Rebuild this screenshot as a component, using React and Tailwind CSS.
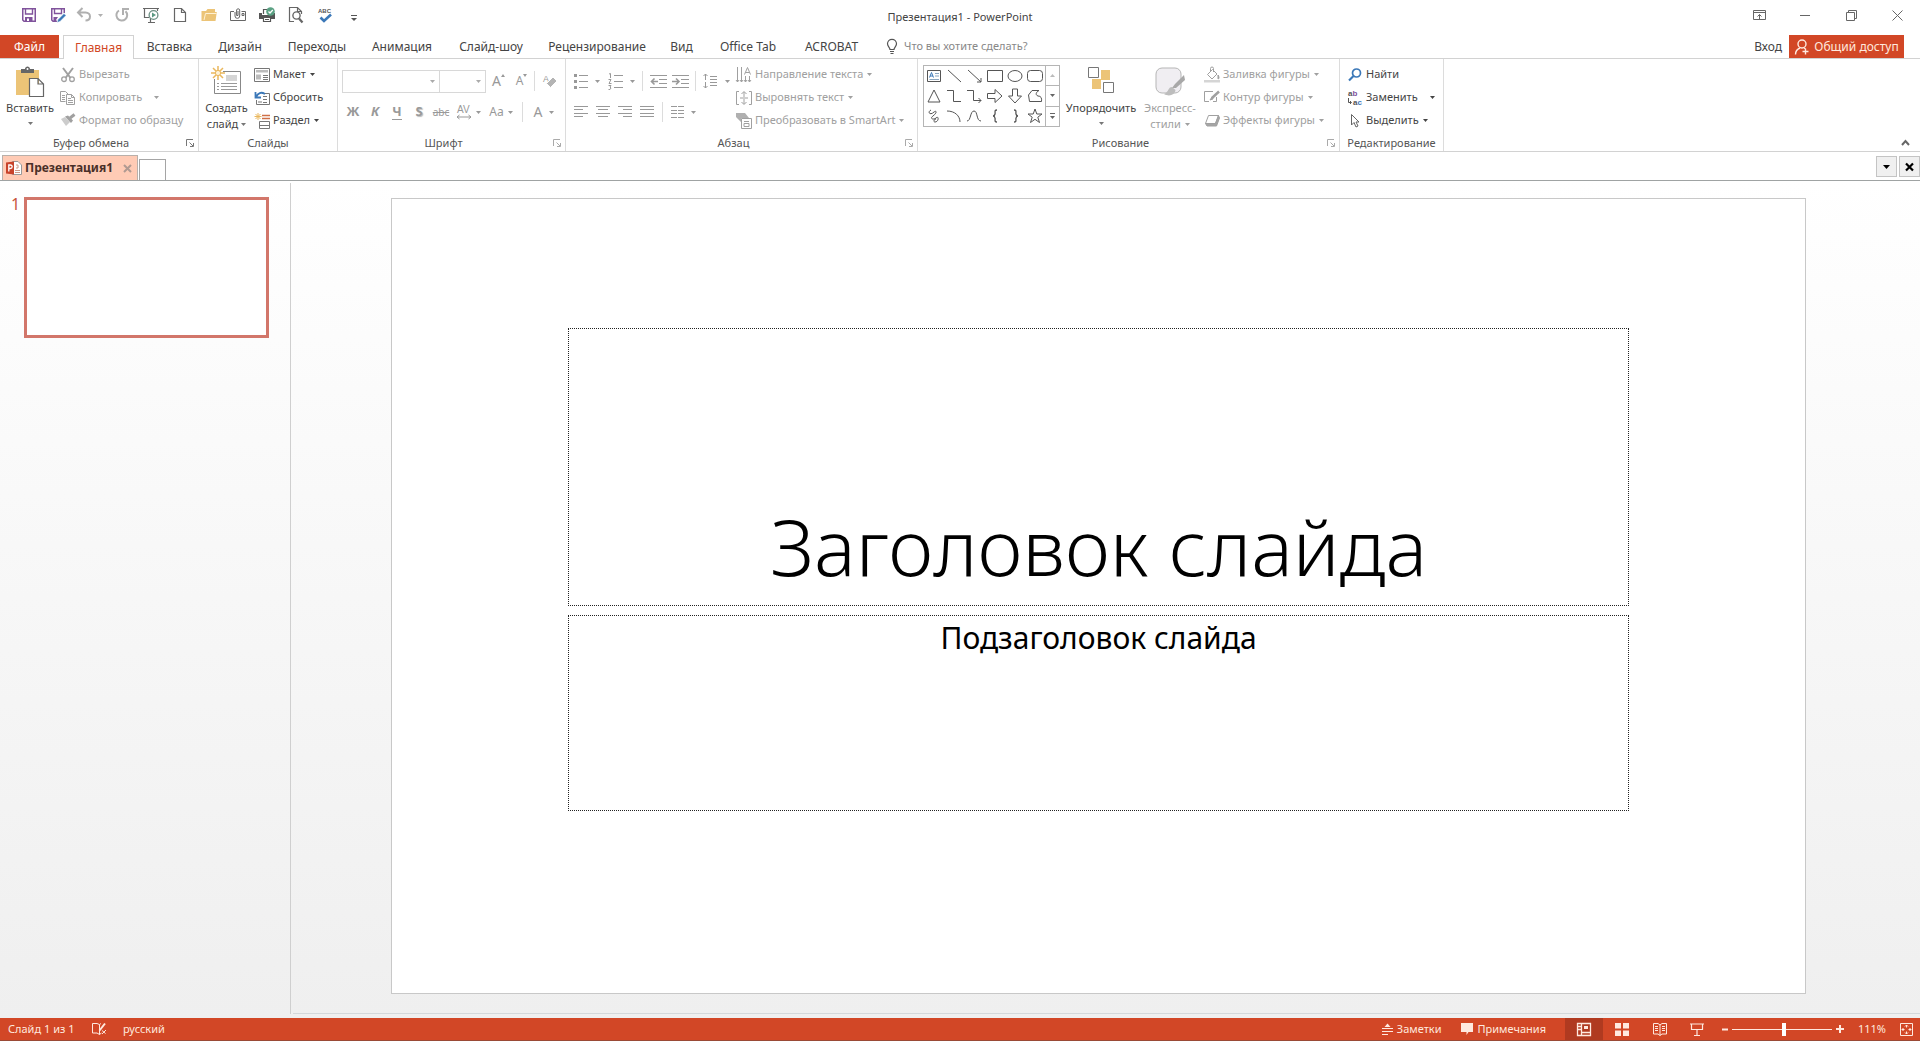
import React from "react";

function Svg({ w = 16, h = 16, className = "", children }) {
  return (
    <svg
      width={w}
      height={h}
      viewBox={`0 0 ${w} ${h}`}
      fill="none"
      stroke="currentColor"
      strokeWidth="1"
      className={`shrink-0 overflow-visible ${className}`}
      aria-hidden="true"
    >
      {children}
    </svg>
  );
}

function Caret({ className = "" }) {
  return (
    <Svg w={5} h={3} className={className}>
      <path d="M0 0H5L2.5 3Z" fill="currentColor" stroke="none" />
    </Svg>
  );
}

/* ---------- Title bar ---------- */

const quickAccess = [
  {
    name: "Сохранить",
    icon: (
      <Svg className="text-[#80539c]">
        <path d="M1.75 1.75H14.25V14.25H3L1.75 13Z" strokeWidth="1.5" />
        <path d="M4.5 2V7H11.5V2" strokeWidth="1.4" />
        <path d="M4 14V10H11.5V14Z" fill="currentColor" stroke="none" />
        <path d="M6 11.5H8V14H6Z" fill="#fff" stroke="none" />
      </Svg>
    ),
  },
  {
    name: "Сохранить как",
    icon: (
      <Svg className="text-[#80539c]">
        <path d="M14.25 6V1.75H1.75V13L3 14.25H7" strokeWidth="1.5" />
        <path d="M4.5 2V6.5H11.5V2" strokeWidth="1.4" />
        <path d="M3.5 10H8L6 13V14H3.5Z" fill="currentColor" stroke="none" />
        <path d="M14 6.5L8 12.5L7 15.5L10 14.5L16 8.5Z" fill="#3b78b8" stroke="#fff" strokeWidth="0.5" />
      </Svg>
    ),
  },
  {
    name: "Отменить",
    wide: true,
    icon: (
      <span className="flex items-center gap-1.5 text-[#b0b0b0]">
        <Svg>
          <path d="M6.5 1L2 5.5L6.5 10M2.5 5.5H9.5C12.5 5.5 14 7.5 14 9.5C14 12 12 13.5 9.5 13.5" strokeWidth="2" />
        </Svg>
        <Caret />
      </span>
    ),
  },
  {
    name: "Повторить",
    icon: (
      <Svg className="text-[#b0b0b0]">
        <path d="M11.5 4.2A5.4 5.4 0 1 1 5 3.5" strokeWidth="2" />
        <path d="M9 8V2H15" strokeWidth="2" />
      </Svg>
    ),
  },
  {
    name: "Слайд-шоу с начала",
    icon: (
      <Svg className="text-[#666]">
        <path d="M0 1.5H16M1.5 2V10.5H6M14.5 2V4M5 15.5H12M7.5 11V15" strokeWidth="1.2" />
        <circle cx="10.5" cy="8" r="4.4" stroke="#6b8f83" strokeWidth="1.3" fill="#fff" />
        <path d="M9 5.6V10.4L13 8Z" fill="#5b9a83" stroke="none" />
      </Svg>
    ),
  },
  {
    name: "Создать",
    icon: (
      <Svg className="text-[#666]">
        <path d="M2.5 1.5H9.5L13.5 5.5V14.5H2.5ZM9.5 1.5V5.5H13.5" strokeWidth="1.2" />
      </Svg>
    ),
  },
  {
    name: "Открыть",
    icon: (
      <Svg className="text-[#ecc477]">
        <path d="M0.5 14V4H5L6.5 2H14V5H15.8L14.5 14Z" fill="currentColor" stroke="none" />
        <path d="M3 13L4.5 6.5H15.5" stroke="#fff1d3" />
      </Svg>
    ),
  },
  {
    name: "Отправить по электронной почте",
    icon: (
      <Svg className="text-[#666]">
        <path d="M4 4.5H0.5V13.5H15.5V4.5H11.5" />
        <path d="M5 5V9A2.3 2.3 0 0 0 9.7 9V3A1.6 1.6 0 0 0 6.6 3V8.5H8V4" />
        <path d="M12 6.5H14V8.5H12Z" />
      </Svg>
    ),
  },
  {
    name: "Быстрая печать",
    icon: (
      <Svg className="text-[#555]">
        <path d="M0 6H3V8H13V6H16V12H12V10H4V12H0Z" fill="currentColor" stroke="none" />
        <path d="M4.5 7V2.5H8M4.5 10.5H11.5V14.5H4.5ZM6 12.5H10" strokeWidth="1.2" />
        <circle cx="11.5" cy="4.5" r="4.3" fill="#5aa183" stroke="none" />
        <path d="M9.5 4.5L11 6L13.8 3" stroke="#fff" strokeWidth="1.3" />
      </Svg>
    ),
  },
  {
    name: "Просмотр",
    icon: (
      <Svg className="text-[#666]">
        <path d="M6 14.5H1.5V0.5H9.5L13.5 4.5V7M9.5 0.5V4.5H13" strokeWidth="1.2" />
        <circle cx="8.5" cy="8.5" r="3.6" strokeWidth="1.4" />
        <path d="M11 11.5L14.5 15.5" strokeWidth="2.2" />
      </Svg>
    ),
  },
  {
    name: "Орфография",
    icon: (
      <Svg w={18} className="text-[#555]">
        <text x="2" y="6" fontSize="6" fontWeight="700" fill="currentColor" stroke="none" fontFamily="Liberation Sans, sans-serif">
          ABC
        </text>
        <path d="M4.5 10.5L8 14L15 7.5" stroke="#3b78b8" strokeWidth="2.6" />
      </Svg>
    ),
  },
  {
    name: "Настройка панели быстрого доступа",
    icon: (
      <Svg w={8} className="text-[#555]">
        <path d="M1 8.5H7" />
        <path d="M1 11H7L4 14Z" fill="currentColor" stroke="none" />
      </Svg>
    ),
  },
];

function TitleBar() {
  return (
    <header className="grid h-[35px] grid-cols-[1fr_auto_1fr] items-start">
      <div className="flex h-[30px] items-center pl-[14px]">
        {quickAccess.map((q) => (
          <button
            key={q.name}
            type="button"
            aria-label={q.name}
            className={`flex h-6 items-center justify-center ${q.wide ? "w-[35px]" : "w-[29px]"}`}
          >
            {q.icon}
          </button>
        ))}
      </div>
      <h1 className="flex h-[34px] items-center text-[11px] text-[#444]">Презентация1 - PowerPoint</h1>
      <div className="flex h-[30px] justify-end text-[#666]">
        <button type="button" aria-label="Параметры отображения ленты" className="flex w-[46px] items-center justify-center">
          <Svg w={13} h={10}>
            <path d="M0.5 0.5H12.5V9.5H0.5ZM0.5 2.5H12.5M6.5 9V4.5M4.5 6.5L6.5 4.5L8.5 6.5" />
          </Svg>
        </button>
        <button type="button" aria-label="Свернуть" className="flex w-[46px] items-center justify-center">
          <Svg w={10} h={10}><path d="M0 5.5H10" /></Svg>
        </button>
        <button type="button" aria-label="Свернуть в окно" className="flex w-[46px] items-center justify-center">
          <Svg w={11} h={11}><path d="M0.5 2.5H8.5V10.5H0.5ZM2.5 2V0.5H10.5V8.5H9" /></Svg>
        </button>
        <button type="button" aria-label="Закрыть" className="flex w-[46px] items-center justify-center">
          <Svg w={11} h={11}><path d="M0.5 0.5L10.5 10.5M10.5 0.5L0.5 10.5" /></Svg>
        </button>
      </div>
    </header>
  );
}

/* ---------- Ribbon tabs ---------- */

const tabs = [
  ["Вставка", "w-[71px]"],
  ["Дизайн", "w-[70px]"],
  ["Переходы", "w-[84px]"],
  ["Анимация", "w-[86px]"],
  ["Слайд-шоу", "w-[92px]"],
  ["Рецензирование", "w-[120px]"],
  ["Вид", "w-[49px]"],
  ["Office Tab", "w-[84px]"],
  ["ACROBAT", "w-[83px]"],
];

function TabRow() {
  return (
    <nav className="flex h-6 border-b border-[#d2d2d2] text-xs text-[#444]">
      <button type="button" className="w-[59px] bg-[#d24726] text-white">Файл</button>
      <button
        type="button"
        className="-mb-px ml-1 w-[71px] border border-b-0 border-[#d2d2d2] bg-white text-[#d24726]"
      >
        Главная
      </button>
      {tabs.map(([label, width]) => (
        <button key={label} type="button" className={`whitespace-nowrap ${width}`}>
          {label}
        </button>
      ))}
      <label className="ml-[13px] flex items-center gap-1.5 text-[#555]">
        <Svg w={12} h={15}>
          <path d="M4 10.5C4 8.5 1.5 7.5 1.5 4.8A4.4 4.4 0 0 1 10.5 4.8C10.5 7.5 8 8.5 8 10.5ZM4 12.5H8M4.5 14.5H7.5" strokeWidth="1.2" />
        </Svg>
        <input
          type="text"
          aria-label="Что вы хотите сделать?"
          placeholder="Что вы хотите сделать?"
          className="w-40 bg-transparent text-[11px] outline-none placeholder:text-[#888]"
        />
      </label>
      <div className="ml-auto flex">
        <button type="button" className="pl-[9px] pr-[7px]">Вход</button>
        <button type="button" className="mr-4 flex w-[115px] items-center justify-center gap-1 whitespace-nowrap bg-[#d24726] text-[#ffe9df]">
          <Svg>
            <circle cx="8" cy="5" r="4" strokeWidth="1.4" />
            <path d="M1.5 15.5C1.5 12 3.5 10 6 9M10 9L11.5 10M11.5 9.5V15.5M8.5 12.5H14.5" strokeWidth="1.4" />
          </Svg>
          <span className="text-xs">Общий доступ</span>
        </button>
      </div>
    </nav>
  );
}

/* ---------- Ribbon building blocks ---------- */

function Group({ label, width, launcher, dim, children }) {
  return (
    <section aria-label={label} className={`flex shrink-0 flex-col border-r border-[#dcdcdc] ${width}`}>
      <div className="flex h-[76px]">{children}</div>
      <div className="flex h-4 items-center">
        <h2 className="flex-1 whitespace-nowrap text-center text-[11px] text-[#555]">{label}</h2>
        {launcher && (
          <button type="button" aria-label={`${label}: параметры`} className={`w-4 ${dim ? "text-[#aaa]" : "text-[#777]"}`}>
            <Svg w={8} h={8} className="mx-auto">
              <path d="M0.5 7V0.5H7M3.5 3.5L7 7M7.5 4V7.5H4" />
            </Svg>
          </button>
        )}
      </div>
    </section>
  );
}

function Row({ icon, label, caret, far, dim }) {
  return (
    <button
      type="button"
      className={`flex h-[23px] items-center whitespace-nowrap text-[11px] ${dim ? "text-[#a0a0a0]" : "text-[#444]"}`}
    >
      <span className="mr-[3px] flex w-4 shrink-0 justify-center">{icon}</span>
      {label}
      {caret && <Caret className={far ? "ml-3" : "ml-1"} />}
    </button>
  );
}

function Tool({ label, width, children, bare }) {
  return (
    <button
      type="button"
      aria-label={label}
      className={`flex h-6 shrink-0 items-center justify-center ${width} ${bare ? "" : "gap-1"}`}
    >
      {children}
    </button>
  );
}

function Divider() {
  return <span className="h-5 w-px shrink-0 bg-[#dcdcdc]" />;
}

const lines = (rows) => rows.map(([x1, x2, y]) => <path key={y} d={`M${x1} ${y}H${x2}`} />);

/* ---------- Ribbon groups ---------- */

function ClipboardGroup() {
  return (
    <Group label="Буфер обмена" width="w-[199px]" launcher>
      <button type="button" className="flex w-[60px] flex-col items-center pt-[7px] text-[11px] leading-4 text-[#444]">
        <Svg w={30} h={32}>
          <path d="M1 4H24V29H1Z" fill="#ecc477" stroke="none" />
          <path d="M6 7V3H10C10 -0.5 15 -0.5 15 3H19V7Z" fill="#666" stroke="none" />
          <circle cx="12.5" cy="3" r="1" fill="#fff" stroke="none" />
          <path d="M14.5 12.5H23L28.5 18V30.5H14.5ZM23 12.5V18H28.5" fill="#fff" stroke="#666" strokeWidth="1.2" />
        </Svg>
        <span className="mt-0.5">Вставить</span>
        <Caret className="mt-1.5 text-[#777]" />
      </button>
      <div className="flex flex-col items-start pt-1">
        <Row
          dim
          label="Вырезать"
          icon={
            <Svg>
              <path d="M3 1L10.5 11M13 1L5.5 11" strokeWidth="2" />
              <circle cx="4" cy="12.2" r="2.3" strokeWidth="1.3" />
              <circle cx="12" cy="12.2" r="2.3" strokeWidth="1.3" />
            </Svg>
          }
        />
        <Row
          dim
          caret
          far
          label="Копировать"
          icon={
            <Svg>
              <path d="M5.5 11.5H0.5V1.5H5.5L8.5 4.5M2 5.5H5M2 7.5H5M2 9.5H5" />
              <path d="M6.5 4.5H11.5L14.5 7.5V14.5H6.5ZM11.5 4.5V7.5H14.5M8 8.5H11M8 10.5H13M8 12.5H13" />
            </Svg>
          }
        />
        <Row
          dim
          label="Формат по образцу"
          icon={
            <Svg>
              <path d="M1 6L5 4L10 9L6 13Z" fill="#ccc" stroke="none" />
              <path d="M5 3.5L8 2.5L13 7.5L11 10Z" fill="currentColor" stroke="none" />
              <path d="M10 5L14.5 1.5" strokeWidth="3" />
            </Svg>
          }
        />
      </div>
    </Group>
  );
}

function SlidesGroup() {
  return (
    <Group label="Слайды" width="w-[139px]">
      <button type="button" className="flex w-[55px] flex-col items-center pt-[7px] text-[11px] leading-4 text-[#444]">
        <Svg w={32} h={32}>
          <path d="M12 5.5H29.5V27.5H3.5V13" stroke="#888" />
          <path d="M15 9H26V15H15Z" fill="#d5d5d5" stroke="none" />
          <path d="M10 17.5H26M10 20.5H26M10 23.5H26M6 17.5H8M6 20.5H8M6 23.5H8" stroke="#999" />
          <path d="M7 0V14M0 7H14M2 2L12 12M12 2L2 12" stroke="#eab85e" strokeWidth="1.5" />
          <circle cx="7" cy="7" r="2.6" fill="#fff3d8" stroke="#eab85e" />
        </Svg>
        <span className="mt-0.5">Создать</span>
        <span className="flex items-center gap-[3px]">
          слайд
          <Caret className="text-[#777]" />
        </span>
      </button>
      <div className="flex flex-col items-start pt-1">
        <Row
          caret
          label="Макет"
          icon={
            <Svg className="text-[#777]">
              <path d="M0.5 1.5H15.5V14.5H0.5Z" />
              <path d="M2 3H14V5.5H2ZM2 7.5H7V12.5H2Z" fill="#bbb" stroke="none" />
              <path d="M9 8.5H14M9 10.5H14M9 12.5H14" />
            </Svg>
          }
        />
        <Row
          label="Сбросить"
          icon={
            <Svg className="text-[#777]">
              <path d="M8 3.5H15.5V14.5H2.5V10M9 6.5H13M9 9.5H13M9 12.5H13" />
              <path d="M4 11H8V13H4Z" fill="#bbb" stroke="none" />
              <path d="M1.5 2V7.5H7M2 7C4 3 7 1.5 11 4" stroke="#3b78b8" strokeWidth="1.8" />
            </Svg>
          }
        />
        <Row
          caret
          label="Раздел"
          icon={
            <Svg className="text-[#777]">
              <path d="M8 2.5H16M8 5.5H16" stroke="#cf7048" strokeWidth="1.3" />
              <path d="M5.5 8.5H15.5V15.5H5.5ZM5.5 12.5H15.5" />
              <path d="M4 0V7M0.5 3.5H7.5M1.5 1L6.5 6M6.5 1L1.5 6" stroke="#eab85e" />
            </Svg>
          }
        />
      </div>
    </Group>
  );
}

function Combo({ label, width }) {
  return (
    <span className={`flex h-[23px] items-center border border-[#d8d8d8] pr-1 text-[#aaa] ${width}`}>
      <select aria-label={label} disabled className="h-full min-w-0 flex-1 appearance-none bg-transparent text-[11px]">
        <option value="" />
      </select>
      <Caret />
    </span>
  );
}

function FontGroup() {
  return (
    <Group label="Шрифт" width="w-[228px]" launcher dim>
      <div className="pl-1 text-[#999]">
        <div className="mt-[10px] flex h-6 items-center">
          <Combo label="Шрифт" width="w-[98px]" />
          <Combo label="Размер шрифта" width="w-[46px] border-l-0" />
          <Tool label="Увеличить размер шрифта" width="w-[25px]" bare>
            <span className="text-sm leading-4">A</span>
            <Svg w={4} h={10}><path d="M0 1L2 -2L4 1Z" fill="currentColor" stroke="none" /></Svg>
          </Tool>
          <Tool label="Уменьшить размер шрифта" width="w-[21px]" bare>
            <span className="text-xs leading-4">A</span>
            <Svg w={4} h={12}><path d="M0 -1H4L2 2Z" fill="currentColor" stroke="none" /></Svg>
          </Tool>
          <span className="w-0.5" />
          <Divider />
          <Tool label="Очистить формат" width="w-[32px]">
            <Svg>
              <text x="0" y="9" fontSize="9" fill="currentColor" stroke="none" fontFamily="Liberation Sans, sans-serif">A</text>
              <path d="M3.5 10.5L10 4L14 8L7.5 14.5Z" fill="#b4b4b4" stroke="#fff" />
            </Svg>
          </Tool>
        </div>
        <div className="mt-[7px] flex h-6 items-center text-[13px]">
          <Tool label="Полужирный" width="w-[22px]"><b className="font-bold">Ж</b></Tool>
          <Tool label="Курсив" width="w-[22px]"><i className="font-bold">К</i></Tool>
          <Tool label="Подчеркнутый" width="w-[22px]"><b className="border-b border-[#999] leading-[15px]">Ч</b></Tool>
          <Tool label="Тень текста" width="w-[22px]"><b className="[text-shadow:1px_1px_1px_#bbb]">S</b></Tool>
          <Tool label="Зачеркнутый" width="w-[22px]"><span className="text-[10px] line-through">abc</span></Tool>
          <Tool label="Межзнаковый интервал" width="w-[32px]">
            <Svg w={16} h={16}>
              <text x="1" y="9" fontSize="10" fill="currentColor" stroke="none" fontFamily="Liberation Sans, sans-serif">AV</text>
              <path d="M1 13H15M3.5 11L1 13L3.5 15M12.5 11L15 13L12.5 15" />
            </Svg>
            <Caret />
          </Tool>
          <Tool label="Регистр" width="w-[34px]">
            <span className="text-xs">Aa</span>
            <Caret />
          </Tool>
          <span className="w-1" />
          <Divider />
          <Tool label="Цвет текста" width="w-[42px]">
            <span className="mr-[3px] text-sm">A</span>
            <Caret />
          </Tool>
        </div>
      </div>
    </Group>
  );
}

function ParagraphGroup() {
  return (
    <Group label="Абзац" width="w-[352px]" launcher dim>
      <div className="w-[170px] pl-1 text-[#999]">
        <div className="mt-[10px] flex h-6 items-center">
          <Tool label="Маркеры" width="w-[34px]">
            <span className="flex items-center gap-[7px]">
              <Svg w={14} h={15}>
                {lines([[5, 14, 1.5], [5, 14, 7.5], [5, 14, 13.5]])}
                <path d="M0 0H3V3H0ZM0 6H3V9H0ZM0 12H3V15H0Z" fill="currentColor" stroke="none" />
              </Svg>
              <Caret />
            </span>
          </Tool>
          <Tool label="Нумерация" width="w-[34px]">
            <span className="flex items-center gap-[7px]">
              <Svg w={15} h={17}>
                {lines([[6, 15, 2.5], [6, 15, 8.5], [6, 15, 14.5]])}
                <path d="M1 1L2.5 0.5V5M0.5 6.5H3L1 10.5H3.5M0.5 12.5H3L2 14L3 15L2 16.5H0.5" />
              </Svg>
              <Caret />
            </span>
          </Tool>
          <span className="w-1" />
          <Divider />
          <span className="w-1" />
          <Tool label="Уменьшить отступ" width="w-[22px]">
            <Svg w={17} h={15}>
              {lines([[0, 17, 1.5], [9, 17, 5.5], [9, 17, 9.5], [0, 17, 13.5]])}
              <path d="M8 7.5H2M4.5 4.5L1.5 7.5L4.5 10.5" strokeWidth="1.6" />
            </Svg>
          </Tool>
          <Tool label="Увеличить отступ" width="w-[22px]">
            <Svg w={17} h={15}>
              {lines([[0, 17, 1.5], [9, 17, 5.5], [9, 17, 9.5], [0, 17, 13.5]])}
              <path d="M0 7.5H6M4 4.5L7 7.5L4 10.5" strokeWidth="1.6" />
            </Svg>
          </Tool>
          <span className="w-1" />
          <Divider />
          <Tool label="Междустрочный интервал" width="w-[40px]">
            <span className="flex items-center gap-2">
              <Svg w={14} h={16}>
                {lines([[7, 14, 3.5], [7, 14, 6.5], [7, 14, 9.5], [7, 14, 12.5]])}
                <path d="M2.5 7V1M0.5 3L2.5 1L4.5 3M2.5 9V15M0.5 13L2.5 15L4.5 13" />
              </Svg>
              <Caret />
            </span>
          </Tool>
        </div>
        <div className="mt-[7px] flex h-6 items-center">
          <Tool label="По левому краю" width="w-[22px]">
            <Svg w={14} h={12}>{lines([[0, 14, 0.5], [0, 9, 3.5], [0, 14, 7.5], [0, 9, 10.5]])}</Svg>
          </Tool>
          <Tool label="По центру" width="w-[22px]">
            <Svg w={14} h={12}>{lines([[0, 14, 0.5], [2, 12, 3.5], [0, 14, 7.5], [2, 12, 10.5]])}</Svg>
          </Tool>
          <Tool label="По правому краю" width="w-[22px]">
            <Svg w={14} h={12}>{lines([[0, 14, 0.5], [5, 14, 3.5], [0, 14, 7.5], [5, 14, 10.5]])}</Svg>
          </Tool>
          <Tool label="По ширине" width="w-[22px]">
            <Svg w={14} h={12}>{lines([[0, 14, 0.5], [0, 14, 3.5], [0, 14, 7.5], [0, 14, 10.5]])}</Svg>
          </Tool>
          <span className="w-1" />
          <Divider />
          <Tool label="Колонки" width="w-[40px]">
            <span className="flex items-center gap-[7px]">
              <Svg w={13} h={12}>
                {lines([[0, 6, 0.5], [0, 6, 4.5], [0, 6, 7.5], [0, 6, 11.5]])}
                {lines([[7, 13, 0.5], [7, 13, 4.5], [7, 13, 7.5], [7, 13, 11.5]])}
              </Svg>
              <Caret />
            </span>
          </Tool>
        </div>
      </div>
      <div className="flex flex-col items-start pt-1">
        <Row
          dim
          caret
          label="Направление текста"
          icon={
            <Svg>
              <path d="M1.5 0V15M5.5 0V15M9.5 9V15M13.5 9V15M0 13L1.5 15L3 13M4 13L5.5 15L7 13M8 13L9.5 15L11 13M12 13L13.5 15L15 13" />
              <path d="M8.5 7.5L11.5 0.5L14.5 7.5M9.5 5.5H13.5" />
            </Svg>
          }
        />
        <Row
          dim
          caret
          label="Выровнять текст"
          icon={
            <Svg>
              <path d="M3 1.5H0.5V14.5H3M13 1.5H15.5V14.5H13M8 7V2M5.5 4L8 1.5L10.5 4M8 9V14M5.5 12L8 14.5L10.5 12M4 8H12" />
            </Svg>
          }
        />
        <Row
          dim
          caret
          label="Преобразовать в SmartArt"
          icon={
            <Svg>
              <path d="M0 0H9L13 5H5V9L0 4Z" fill="#b0b0b0" stroke="none" />
              <path d="M5.5 5.5H15.5V15.5H5.5ZM8 8.5H13M8 10.5H13V13.5H8Z" fill="#fff" />
            </Svg>
          }
        />
      </div>
    </Group>
  );
}

const shapes = [
  ["Надпись", <><path d="M1.5 2.5H14.5V13.5H1.5Z" /><path d="M3.5 9.5L5.5 4.5L7.5 9.5M4 8H7" stroke="#3b78b8" /><path d="M9 5.5H13M9 8H13M3.5 11.5H13" stroke="#8aa6c0" /></>],
  ["Линия", <path d="M2 2L15 14" />],
  ["Стрелка", <path d="M2 2L15 14M15 10V14H11" />],
  ["Прямоугольник", <path d="M0.5 2.5H15.5V13.5H0.5Z" />],
  ["Овал", <ellipse cx="8" cy="8" rx="7" ry="5.5" />],
  ["Скругленный прямоугольник", <rect x="0.5" y="2.5" width="15" height="11" rx="3" />],
  ["Треугольник", <path d="M8 2L14 14H2Z" />],
  ["Соединительная линия", <path d="M1 2.5H7.5V13.5H15" />],
  ["Соединительная стрелка", <path d="M1 2.5H7.5V12.5H15M12.5 10L15 12.5L12.5 15" />],
  ["Стрелка вправо", <path d="M0.5 5.5H8V1.5L15 8L8 14.5V10.5H0.5Z" />],
  ["Стрелка вниз", <path d="M5.5 1V8H1.5L8 15L14.5 8H10.5V1Z" />],
  ["Полилиния", <path d="M2.5 13.5L1.5 7L5 2.5H12C9 4 8 7 11 8C14 8 15 10 14.5 13.5Z" />],
  ["Рисованная кривая", <path d="M5 2C1 4 4 8 8 4C11 2 11 5 7 8C3 11 8 12 10 10C13 7 13 14 9 14C7 14 8 11 10 11" />],
  ["Дуга", <path d="M1 3C9 3 14 8 14 14" />],
  ["Кривая", <path d="M1 13C5 13 4 3 8 3C12 3 10 13 15 13" />],
  ["Левая фигурная скобка", <path d="M10 2C7 2 8.5 4 8 6C7.7 7.5 7 8 6 8C7 8 7.7 8.5 8 10C8.5 12 7 14 10 14" strokeWidth="1.3" />],
  ["Правая фигурная скобка", <path d="M7 2C10 2 8.5 4 9 6C9.3 7.5 10 8 11 8C10 8 9.3 8.5 9 10C8.5 12 10 14 7 14" strokeWidth="1.3" />],
  ["Звезда", <path d="M8 1L9.8 6H15L10.8 9.2L12.5 14.5L8 11.3L3.5 14.5L5.2 9.2L1 6H6.2Z" />],
];

function DrawingGroup() {
  return (
    <Group label="Рисование" width="w-[422px]" launcher dim>
      <div className="ml-[5px] mt-[6px] flex h-[62px] w-[137px] shrink-0 border border-[#b5b5b5] text-[#555]">
        <div className="grid flex-1 grid-cols-6 grid-rows-3">
          {shapes.map(([name, drawing]) => (
            <button key={name} type="button" aria-label={name} className="flex items-center justify-center">
              <Svg>{drawing}</Svg>
            </button>
          ))}
        </div>
        <div className="flex w-[14px] flex-col divide-y divide-[#b5b5b5] border-l border-[#b5b5b5] text-[#666]">
          <button type="button" aria-label="Вверх" className="flex flex-1 items-center justify-center text-[#bbb]">
            <Caret className="rotate-180" />
          </button>
          <button type="button" aria-label="Вниз" className="flex flex-1 items-center justify-center">
            <Caret />
          </button>
          <button type="button" aria-label="Дополнительные фигуры" className="flex flex-1 flex-col items-center justify-center gap-[2px]">
            <span className="h-px w-[5px] bg-[#666]" />
            <Caret />
          </button>
        </div>
      </div>
      <button type="button" className="ml-[3px] flex w-[76px] shrink-0 flex-col items-center pt-[7px] text-[11px] leading-4 text-[#444]">
        <Svg w={28} h={32}>
          <path d="M5 13H14V23H5ZM14 4H23V14H14Z" fill="#ecc477" stroke="none" />
          <path d="M1.5 1.5H11.5V11.5H1.5ZM16.5 16.5H26.5V26.5H16.5Z" fill="#fff" stroke="#777" />
        </Svg>
        <span className="mt-0.5">Упорядочить</span>
        <Caret className="mt-1.5 text-[#777]" />
      </button>
      <button type="button" className="mr-[3px] flex w-[62px] shrink-0 flex-col items-center whitespace-nowrap pt-[7px] text-[11px] leading-4 text-[#a0a0a0]">
        <Svg w={30} h={32}>
          <rect x="1" y="2" width="25" height="25" rx="6" fill="#f0eef2" stroke="#b5b5b5" />
          <path d="M29 9L20 18L17 22L21 22L30 14Z" fill="#a8a8a8" stroke="none" />
          <path d="M17 21C13 21 14 26 9 28C14 31 20 29 20.5 24Z" fill="#bdbdbd" stroke="none" />
        </Svg>
        <span className="mt-0.5">Экспресс-</span>
        <span className="flex items-center gap-1">
          стили
          <Caret />
        </span>
      </button>
      <div className="flex flex-col items-start pt-1">
        <Row
          dim
          caret
          label="Заливка фигуры"
          icon={
            <Svg>
              <path d="M3.5 7.5L8.5 2.5L13 7L8 12ZM6.5 4V1.5A1.5 1.5 0 0 1 9.5 1.5V5" />
              <path d="M14 8C16 11 14.5 12 14 12Z" fill="currentColor" />
              <path d="M0 13H16V15.5H0Z" fill="#d5d5d5" stroke="none" />
            </Svg>
          }
        />
        <Row
          dim
          caret
          label="Контур фигуры"
          icon={
            <Svg>
              <path d="M9 1.5H0.5V11.5H5M12.5 7V11.5H9" />
              <path d="M15 1.5L8 8" strokeWidth="2.5" />
              <path d="M8 7L6 10L9 9Z" fill="currentColor" />
            </Svg>
          }
        />
        <Row
          dim
          caret
          label="Эффекты фигуры"
          icon={
            <Svg>
              <path d="M4.5 2.5H14.5L11.5 10.5H1.5Z" fill="#fff" />
              <path d="M1.5 10.5L3 13H12.5L15.5 5L14.5 2.5L11.5 10.5Z" fill="#a5a5a5" />
            </Svg>
          }
        />
      </div>
    </Group>
  );
}

function EditingGroup() {
  return (
    <Group label="Редактирование" width="w-[104px]">
      <div className="flex flex-col items-start pl-[7px] pt-1">
        <Row
          label="Найти"
          icon={
            <Svg className="text-[#3b78b8]">
              <circle cx="9.5" cy="6" r="4" strokeWidth="1.7" />
              <path d="M6.5 9L2 13.5" strokeWidth="2.2" />
            </Svg>
          }
        />
        <Row
          caret
          far
          label="Заменить"
          icon={
            <Svg h={19}>
              <text x="1" y="8" fontSize="8" fontWeight="700" fill="#555" stroke="none" fontFamily="Liberation Sans, sans-serif">
                a<tspan fill="#80539c">b</tspan>
              </text>
              <text x="6" y="17" fontSize="8" fontWeight="700" fill="#555" stroke="none" fontFamily="Liberation Sans, sans-serif">
                a<tspan fill="#3b78b8">c</tspan>
              </text>
              <path d="M1.5 10V14.5H4M3 13L4.5 14.5L3 16" stroke="#555" />
            </Svg>
          }
        />
        <Row
          caret
          label="Выделить"
          icon={
            <Svg className="text-[#666]">
              <path d="M4.5 1.5V12L7 9.5L9 14L11 13L9 9H12Z" />
            </Svg>
          }
        />
      </div>
    </Group>
  );
}

function Ribbon() {
  return (
    <div className="flex h-[93px] border-b border-[#d2d2d2]">
      <ClipboardGroup />
      <SlidesGroup />
      <FontGroup />
      <ParagraphGroup />
      <DrawingGroup />
      <EditingGroup />
      <button type="button" aria-label="Свернуть ленту" className="mb-[5px] ml-auto mr-[10px] self-end text-[#666]">
        <Svg w={9} h={7}><path d="M1 6L4.5 2L8 6" strokeWidth="2" /></Svg>
      </button>
    </div>
  );
}

/* ---------- Document tabs ---------- */

function DocumentTabs() {
  return (
    <div className="flex h-[29px] items-end border-b border-[#9fa3a3] pl-[2px]">
      <div className="flex h-[25px] w-[136px] items-center border border-b-0 border-[#b9b0aa] bg-[#ffcbb5] pl-[3px]">
        <Svg w={16} h={16}>
          <path d="M6.5 1.5H12L15.5 5V14.5H6.5Z" fill="#fff" stroke="#999" />
          <path d="M10 5H12V8H10M9 10.5H14M9 12.5H14" stroke="#c98" />
          <path d="M0 2.5L8 1.5V14.5L0 13.5Z" fill="#c8432b" stroke="none" />
          <path d="M2.8 11.5V5H4.3C6.8 5 6.8 8.5 4.3 8.5H2.8" stroke="#fff" strokeWidth="1.3" />
        </Svg>
        <button type="button" className="ml-[3px] text-xs font-bold text-[#4a2f28]">Презентация1</button>
        <button type="button" aria-label="Закрыть вкладку" className="ml-auto mr-[5px] text-[#b09a92]">
          <Svg w={9} h={9}><path d="M1 1L8 8M8 1L1 8" strokeWidth="2" /></Svg>
        </button>
      </div>
      <button type="button" aria-label="Новая вкладка" className="ml-px h-[21px] w-[27px] border border-b-0 border-[#a5a5a5] bg-white" />
      <div className="mb-[3px] ml-auto flex gap-[2px] text-black">
        <button type="button" aria-label="Список вкладок" className="flex h-[21px] w-[21px] items-center justify-center border border-[#c4c4c4] bg-[#f0f0f0]">
          <Svg w={7} h={4}><path d="M0 0H7L3.5 4Z" fill="currentColor" stroke="none" /></Svg>
        </button>
        <button type="button" aria-label="Закрыть документ" className="flex h-[21px] w-[21px] items-center justify-center border border-[#c4c4c4] bg-[#f0f0f0]">
          <Svg w={9} h={8}><path d="M1 0.5L8 7.5M8 0.5L1 7.5" strokeWidth="2.2" /></Svg>
        </button>
      </div>
    </div>
  );
}

/* ---------- Workspace ---------- */

function Workspace() {
  return (
    <main className="flex flex-1 bg-linear-to-b from-white to-[#efefef] pb-1 pt-[2px]">
      <aside className="flex w-[291px] shrink-0 items-start border-r border-[#cfcfcf] pl-[11px] pt-[14px]">
        <span className="w-[13px] text-base leading-[14px] text-[#c8553d]">1</span>
        <button type="button" aria-label="Слайд 1" className="h-[141px] w-[245px] border-3 border-[#d2766a] bg-white" />
      </aside>
      <section className="ml-[2px] flex flex-1 border-b border-[#d4d8da] pb-[19px] pl-[98px] pr-[114px] pt-[15px]">
        <article className="flex min-h-[600px] flex-1 flex-col items-center border border-[#c8c8c8] bg-white pt-[129px]">
          <h2 className="box-content flex h-[276px] w-3/4 items-end justify-center border border-dotted border-[#222] text-[78px] font-light leading-[118px] text-black">
            Заголовок слайда
          </h2>
          <p className="mt-[9px] box-content h-[192px] w-3/4 border border-dotted border-[#222] pt-[2px] text-center text-[30px] leading-[40px] text-black">
            Подзаголовок слайда
          </p>
        </article>
      </section>
    </main>
  );
}

/* ---------- Status bar ---------- */

function StatusBar() {
  return (
    <footer className="flex h-[23px] items-center border-b border-[#9a4a36] bg-[#d24726] text-[11px] text-[#ffe9df]">
      <span className="w-[92px] whitespace-nowrap pl-2">Слайд 1 из 1</span>
      <button type="button" aria-label="Проверка правописания">
        <Svg w={15} h={14}>
          <path d="M7.5 2.5V12.5M7.5 2.5L5 1.5H0.5V11H5L7.5 12.5L9.5 11M7.5 2.5L9 1.5" />
          <path d="M13 1.5L7.5 8.5" strokeWidth="2" />
          <path d="M10 12L14 8M10 8.5L13.5 11.5" />
        </Svg>
      </button>
      <button type="button" className="ml-4">русский</button>

      <div className="ml-auto flex items-center self-stretch">
        <button type="button" className="flex items-center gap-1">
          <Svg w={11} h={13}>
            <path d="M0 5.5H11M0 8.5H11M0 11.5H6" />
            <path d="M2.5 4H8.5L5.5 0.5Z" fill="currentColor" stroke="none" />
          </Svg>
          Заметки
        </button>
        <button type="button" className="ml-5 flex items-center gap-1">
          <Svg w={12} h={12}>
            <path d="M0 0H12V9H7.5L5.5 12V9H0Z" fill="currentColor" stroke="none" />
          </Svg>
          Примечания
        </button>
        <button type="button" aria-label="Обычный" className="ml-[19px] flex w-[38px] items-center justify-center self-stretch bg-[#b03a20]">
          <Svg w={14} h={13}>
            <path d="M0.5 0.5H13.5V12.5H0.5ZM4.5 0.5V12.5M4.5 9.5H13.5M1 3.5H4M1 6.5H4" strokeWidth="1.3" />
            <path d="M7 3H11V6H7Z" fill="currentColor" stroke="none" />
          </Svg>
        </button>
        <button type="button" aria-label="Сортировщик слайдов" className="flex w-[38px] items-center justify-center">
          <Svg w={14} h={13}>
            <path d="M0 0H6V5.5H0ZM8 0H14V5.5H8ZM0 7.5H6V13H0ZM8 7.5H14V13H8Z" fill="currentColor" stroke="none" />
          </Svg>
        </button>
        <button type="button" aria-label="Режим чтения" className="flex w-[37px] items-center justify-center">
          <Svg w={14} h={13}>
            <path d="M7 2V12.5M7 2L5 0.5H0.5V11H5L7 12.5L9 11H13.5V0.5H9ZM2 3.5H5M2 5.5H5M2 7.5H5M9 3.5H12M9 5.5H12M9 7.5H12" />
          </Svg>
        </button>
        <button type="button" aria-label="Слайд-шоу" className="flex w-[38px] items-center justify-center">
          <Svg w={14} h={13}>
            <path d="M0 1H14M1.5 1V6.5H12.5V1M7 7V12M4 12.5H10" strokeWidth="1.2" />
          </Svg>
        </button>
        <button type="button" aria-label="Уменьшить" className="ml-[5px] flex w-[7px] items-center">
          <Svg w={7} h={7}><path d="M1 3.5H7" strokeWidth="2" /></Svg>
        </button>
        <input
          type="range"
          aria-label="Масштаб"
          min="0"
          max="100"
          defaultValue="52"
          className="ml-1 h-3.5 w-[100px] appearance-none bg-transparent [&::-webkit-slider-runnable-track]:h-px [&::-webkit-slider-runnable-track]:bg-[#ffe9df] [&::-webkit-slider-thumb]:-mt-[6px] [&::-webkit-slider-thumb]:h-[13px] [&::-webkit-slider-thumb]:w-1 [&::-webkit-slider-thumb]:appearance-none [&::-webkit-slider-thumb]:bg-white"
        />
        <button type="button" aria-label="Увеличить" className="ml-1 flex w-[8px] items-center">
          <Svg w={8} h={8}><path d="M0 4H8M4 0V8" strokeWidth="2" /></Svg>
        </button>
        <span className="w-[56px] text-center">111%</span>
        <button type="button" aria-label="По размеру окна" className="mr-[7px]">
          <Svg w={13} h={13}>
            <path d="M0.5 0.5H12.5V12.5H0.5Z" />
            <path d="M6.5 2V4.5M6.5 8.5V11M2 6.5H4.5M8.5 6.5H11M5 3.5L6.5 2L8 3.5M5 9.5L6.5 11L8 9.5M3.5 5L2 6.5L3.5 8M9.5 5L11 6.5L9.5 8" />
          </Svg>
        </button>
      </div>
    </footer>
  );
}

export default function App() {
  return (
    <div className="flex min-h-screen flex-col bg-white font-['Noto_Sans','Open_Sans',sans-serif]">
      <TitleBar />
      <TabRow />
      <Ribbon />
      <DocumentTabs />
      <Workspace />
      <StatusBar />
    </div>
  );
}
